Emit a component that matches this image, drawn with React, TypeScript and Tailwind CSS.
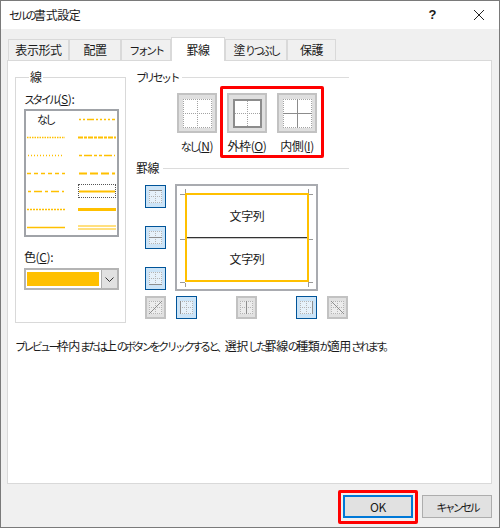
import React from 'react';

type Edge = 'top' | 'midH' | 'bottom' | 'left' | 'midV' | 'right' | 'diagUp' | 'diagDown';

// The dialog's UI font has narrow kana, so kana runs get a tighter setting than kanji
const Jp = ({ children }: { children: string }) => (
    <>
        {children.split(/([\u3000-\u30ff]+)/).map((part, i) =>
            i % 2 ? (
                <span key={i} className="text-[11px] tracking-[-2.65px]">{part}</span>
            ) : (
                <span key={i}>{part}</span>
            )
        )}
    </>
);

// Dotted cell grid with some edges drawn solid, used by the preset and border buttons
const GridGlyph = ({ size, solid = [], weight = 1, dots = '#a3a3a3', ink = '#8c8c8c' }: { size: number; solid?: Edge[]; weight?: number; dots?: string; ink?: string }) => {
    const m = Math.floor(size / 2) + 0.5;
    const line = (e: Edge, w: number): [number, number, number, number] => {
        const a = w / 2;
        const b = size - w / 2;
        return {
            top: [0, a, size, a],
            midH: [0, m, size, m],
            bottom: [0, b, size, b],
            left: [a, 0, a, size],
            midV: [m, 0, m, size],
            right: [b, 0, b, size],
            diagUp: [0, size, size, 0],
            diagDown: [0, 0, size, size],
        }[e] as [number, number, number, number];
    };
    const base: Edge[] = ['top', 'midH', 'bottom', 'left', 'midV', 'right'];
    return (
        <svg width={size} height={size} className="block">
            {base.filter((e) => !solid.includes(e)).map((e) => {
                const [x1, y1, x2, y2] = line(e, 1);
                return <line key={e} x1={x1} y1={y1} x2={x2} y2={y2} stroke={dots} strokeWidth="1" strokeDasharray="1 1" />;
            })}
            {solid.map((e) => {
                const w = e === 'midH' || e === 'midV' || e === 'diagUp' || e === 'diagDown' ? 1 : weight;
                const [x1, y1, x2, y2] = line(e, w);
                return <line key={e} x1={x1} y1={y1} x2={x2} y2={y2} stroke={ink} strokeWidth={w} />;
            })}
        </svg>
    );
};

const PresetButton = ({ solid, label, hot }: { solid?: Edge[]; label: string; hot: string }) => (
    <div className="flex w-10 flex-col items-center">
        <div className="flex h-10 w-10 items-center justify-center border-2 border-[#c2c2c2] bg-[#dfdfdf]">
            <div className="bg-white">
                <GridGlyph size={29} solid={solid} weight={2} />
            </div>
        </div>
        <span className="mt-[6px] whitespace-nowrap">
            <Jp>{label}</Jp>(<span className="underline">{hot}</span>)
        </span>
    </div>
);

const BorderButton = ({ solid, on, className = '' }: { solid: Edge[]; on?: boolean; className?: string }) => (
    <div
        className={`flex h-[23px] w-[21px] items-center justify-center ${
            on ? 'border-[1.5px] border-[#005499] bg-[#cce4f7]' : 'border-2 border-[#c2c2c2] bg-[#e1e1e1]'
        } ${className}`}
    >
        <div className={on ? 'bg-[#e6f1fa]' : 'bg-[#ececec]'}>
            <GridGlyph size={13} solid={solid} dots="#b4b4b4" ink="#8e8e8e" />
        </div>
    </div>
);

const LineSample = ({ dash, weight = 1.5, double, width = 38 }: { dash?: string; weight?: number; double?: boolean; width?: number }) => (
    <svg width={width} height={5} className="block">
        {double ? (
            <>
                <line x1="0" y1="1" x2={width} y2="1" stroke="#ffc000" strokeWidth="1" />
                <line x1="0" y1="4" x2={width} y2="4" stroke="#ffc000" strokeWidth="1" />
            </>
        ) : (
            <line x1="0" y1="2.5" x2={width} y2="2.5" stroke="#ffc000" strokeWidth={weight} strokeDasharray={dash} />
        )}
    </svg>
);

const StyleList = () => (
    <div className="h-[128px] w-[95px] overflow-hidden border-2 border-[#a0a3a8] bg-white">
        <div className="-mt-[1px] grid grid-cols-[52px_39px] auto-rows-[18px] items-center">
            <span className="pl-[11px]"><Jp>なし</Jp></span>
            <div className="pl-[1px]"><LineSample width={36} dash="2 2 2 2 7 2 2 2 2 2" /></div>
            <div className="pl-[1px]"><LineSample dash="1.5 1" /></div>
            <div><LineSample dash="5 1 3 1" weight={2} /></div>
            <div className="pl-[2px]"><LineSample width={36} dash="1 2" /></div>
            <div className="pl-[1px]"><LineSample width={36} dash="3 2 8 2 3 2" /></div>
            <div className="pl-[1px]"><LineSample dash="4 3" /></div>
            <div className="pl-[1px]"><LineSample width={36} dash="8 3" weight={2} /></div>
            <div className="pl-[2px]"><LineSample width={36} dash="3 3 8 3" /></div>
            <div className="flex h-[14px] w-[38px] items-center border border-dotted border-[#555555]">
                <LineSample width={36} weight={2} />
            </div>
            <div className="pl-[1px]"><LineSample dash="2 1" /></div>
            <div><LineSample weight={3} /></div>
            <div className="pl-[1px]"><LineSample /></div>
            <div><LineSample double /></div>
        </div>
    </div>
);

const Heading = ({ children }: { children: string }) => (
    <div className="flex h-[14px] items-center gap-[4px]">
        <span><Jp>{children}</Jp></span>
        <div className="h-px flex-1 bg-[#dcdcdc]" />
    </div>
);

const App = () => {
    return (
        <div className="relative flex h-[528px] w-[500px] flex-col border border-[#7a7a7a] bg-[#f0f0f0] font-['Noto_Sans_CJK_JP',sans-serif] text-[12px] leading-[14px] tracking-[-0.4px] text-[#1a1a1a]">
            {/* Title bar */}
            <div className="flex h-[28px] shrink-0 items-center bg-white pl-2 pr-[15px]">
                <span><Jp>セルの書式設定</Jp></span>
                <span className="ml-auto font-['Liberation_Sans',sans-serif] text-[13px] font-bold">?</span>
                <svg width="10" height="10" viewBox="0 0 10 10" className="ml-[38px]">
                    <path d="M0 0 L10 10 M10 0 L0 10" stroke="#222222" strokeWidth="1" fill="none" />
                </svg>
            </div>

            {/* Tabs */}
            <div className="flex h-[31px] shrink-0 items-end pl-[7px]">
                {[
                    ['表示形式', 'w-[61px]'],
                    ['配置', 'w-[52px]'],
                    ['フォント', 'w-[50px]'],
                ].map(([t, w]) => (
                    <div key={t} className={`flex h-[21px] items-center justify-center border border-b-0 border-[#d9d9d9] ${w}`}><span><Jp>{t}</Jp></span></div>
                ))}
                <div className="relative z-10 -mb-px flex h-[24px] w-[54px] items-center justify-center border border-b-0 border-[#d9d9d9] bg-white">罫線</div>
                <div className="flex h-[21px] w-[62px] items-center justify-center border border-b-0 border-[#d9d9d9]"><span><Jp>塗りつぶし</Jp></span></div>
                <div className="flex h-[21px] w-[49px] items-center justify-center border border-b-0 border-[#d9d9d9]">保護</div>
            </div>

            {/* Tab page */}
            <div className="ml-[6px] h-[424px] w-[485px] shrink-0 border border-[#d9d9d9] bg-white pl-[7px] pt-[9px]">
                <div className="flex items-start">
                    <fieldset className="h-[253px] w-[111px] shrink-0 border border-[#d9d9d9] pl-[8px]">
                        <legend className="ml-[5px] px-[1px]">線</legend>
                        <div className="mt-[8px] mb-[3px]">
                            <Jp>スタイル</Jp>(<span className="underline">S</span>):
                        </div>
                        <StyleList />
                        <div className="mt-[13px] mb-[4px]">
                            色(<span className="underline">C</span>):
                        </div>
                        <div className="flex h-[22px] w-[95px] items-center border-2 border-[#b4b4b4] bg-white">
                            <div className="ml-[1px] h-[14px] w-[72px] bg-[#ffc000]" />
                            <div className="ml-auto flex h-full w-[16px] items-center justify-center border-l border-[#adadad] bg-[#e1e1e1]">
                                <svg width="9" height="5" viewBox="0 0 9 5">
                                    <path d="M0.5 0.5 L4.5 4.5 L8.5 0.5" stroke="#333333" fill="none" />
                                </svg>
                            </div>
                        </div>
                    </fieldset>

                    <div className="ml-[10px] w-[213px]">
                        <Heading>プリセット</Heading>
                        <div className="ml-[41px] mt-[9px] flex gap-[10px]">
                            <PresetButton label="なし" hot="N" />
                            <PresetButton label="外枠" hot="O" solid={['top', 'bottom', 'left', 'right']} />
                            <PresetButton label="内側" hot="I" solid={['midH', 'midV']} />
                        </div>
                        <div className="mt-[8px]">
                            <Heading>罫線</Heading>
                        </div>
                        <div className="ml-[9px] mt-[9px] flex">
                            <div className="my-[1px] flex flex-col justify-between">
                                <BorderButton on solid={['top']} />
                                <BorderButton on solid={['midH']} />
                                <BorderButton on solid={['bottom']} />
                            </div>
                            {/* Preview */}
                            <div className="relative ml-[9px] flex h-[107px] w-[143px] flex-col border-2 border-[#a9abb0] bg-white pb-[7px] pl-[8px] pr-[7px] pt-[7px]">
                                <svg width="139" height="103" className="absolute left-0 top-0">
                                    <path d="M3 8.5 H8 M131 8.5 H136 M3 53.5 H8 M131 53.5 H136 M3 96.5 H8 M131 96.5 H136 M8.5 3 V8 M131.5 3 V8 M8.5 97 V101 M131.5 97 V101" stroke="#999999" fill="none" />
                                </svg>
                                <div className="relative flex flex-1 flex-col border-2 border-[#ffc000]">
                                    <div className="flex flex-1 items-center justify-center">文字列</div>
                                    <div className="h-[2px] border-t border-[#333333] bg-[#c8c8c8]" />
                                    <div className="flex flex-1 items-center justify-center">文字列</div>
                                </div>
                            </div>
                        </div>
                        <div className="ml-[9px] mt-[5px] flex">
                            <BorderButton solid={['diagUp']} />
                            <BorderButton on solid={['left']} className="ml-[10px]" />
                            <BorderButton solid={['midV']} className="ml-[39px]" />
                            <BorderButton on solid={['right']} className="ml-[39px]" />
                            <BorderButton solid={['diagDown']} className="ml-[10px]" />
                        </div>
                    </div>
                </div>
                <p className="mt-[16px] whitespace-nowrap"><Jp>プレビュー枠内または上のボタンをクリックすると、選択した罫線の種類が適用されます。</Jp></p>
            </div>

            {/* Footer buttons */}
            <div className="mt-[11px] flex justify-end gap-[9px] pr-[7px]">
                <div className="flex h-[23px] w-[70px] items-center justify-center border-2 border-[#0078d7] bg-[#e1e1e1]">OK</div>
                <div className="flex h-[23px] w-[70px] items-center justify-center border border-[#adadad] bg-[#e1e1e1]"><span><Jp>キャンセル</Jp></span></div>
            </div>

            {/* Red annotation frames */}
            <div className="absolute left-[219px] top-[85px] h-[72px] w-[104px] rounded-[2px] border-[3px] border-[#ff0000]" />
            <div className="absolute left-[337px] top-[489px] h-[34px] w-[80px] rounded-[2px] border-[3px] border-[#ff0000]" />
        </div>
    );
};

export default App;
